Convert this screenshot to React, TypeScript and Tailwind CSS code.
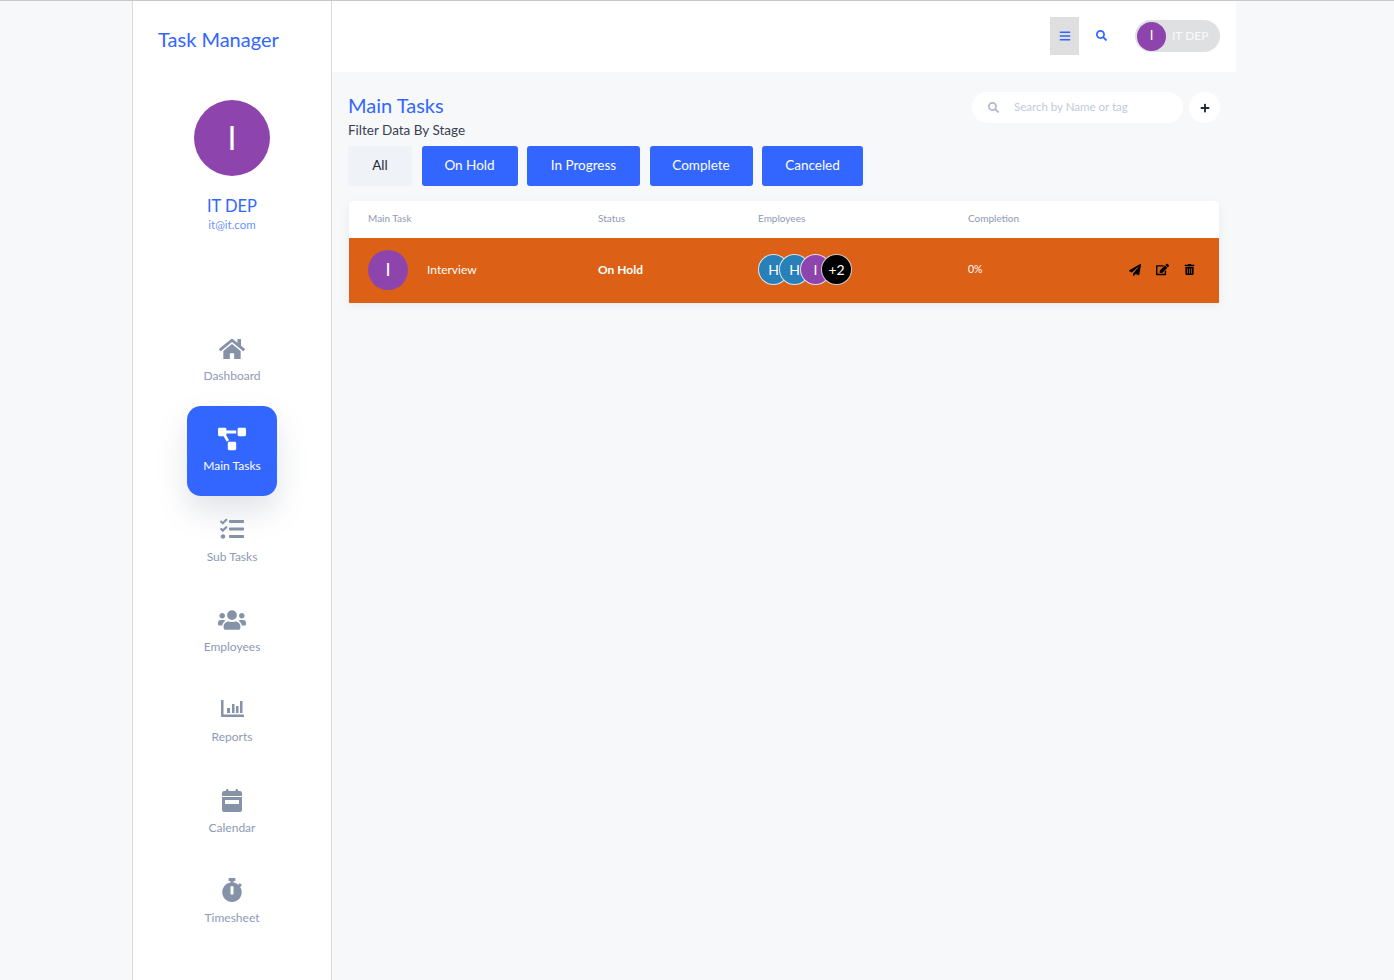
import React from "react";
import { FaHome, FaProjectDiagram, FaTasks, FaUsers, FaStopwatch, FaSearch, FaBars, FaPlus, FaPaperPlane, FaEdit, FaTrashAlt } from "react-icons/fa";

const font = { fontFamily: 'Lato, "Noto Sans", sans-serif' };

function ChartIcon() {
  return (
    <svg width="24" height="19" viewBox="0 0 24 19" fill="currentColor">
      <path d="M1 1h2.5v14.5H23a1 1 0 0 1 1 1V18H2a1 1 0 0 1-1-1z" />
      <rect x="7" y="9" width="3" height="5" />
      <rect x="12" y="5" width="2.5" height="9" />
      <rect x="16" y="7" width="2.5" height="7" />
      <rect x="20" y="2" width="2.5" height="12" />
    </svg>
  );
}

function CalendarIcon() {
  return (
    <svg width="20" height="23" viewBox="0 0 20 23" fill="currentColor">
      <rect x="4" y="0" width="2.5" height="4" rx="1" />
      <rect x="13.5" y="0" width="2.5" height="4" rx="1" />
      <path d="M2 2h16a2 2 0 0 1 2 2v3H0V4a2 2 0 0 1 2-2z" />
      <path d="M0 8h20v13a2 2 0 0 1-2 2H2a2 2 0 0 1-2-2z M3 11v4h14v-4z" fillRule="evenodd" />
    </svg>
  );
}

const navItems = [
  { label: "Dashboard", icon: <FaHome size={26} />, gap: "", pad: "pb-0" },
  { label: "Main Tasks", icon: <FaProjectDiagram size={28} />, gap: "mb-px", pad: "pb-0", active: true },
  { label: "Sub Tasks", icon: <FaTasks size={24} />, gap: "", pad: "pb-[2px]" },
  { label: "Employees", icon: <FaUsers size={28} />, gap: "", pad: "pb-0" },
  { label: "Reports", icon: <ChartIcon />, gap: "mb-px", pad: "pb-[3px]" },
  { label: "Calendar", icon: <CalendarIcon />, gap: "", pad: "pb-[2px]" },
  { label: "Timesheet", icon: <FaStopwatch size={24} />, gap: "", pad: "pb-[2px]" },
];

const stages = [
  { label: "On Hold", w: "w-[96px]" },
  { label: "In Progress", w: "w-[113px]" },
  { label: "Complete", w: "w-[103px]" },
  { label: "Canceled", w: "w-[101px]" },
];

function Bubble({ text, color, className = "" }: { text: string; color: string; className?: string }) {
  return (
    <div className={`w-[31px] h-[31px] rounded-full border border-white/80 flex items-center justify-center text-[14px] text-white shrink-0 ${color} ${className}`}>
      {text}
    </div>
  );
}

export default function App() {
  return (
    <div className="h-[980px] overflow-hidden bg-[#f7f8fa] border-t border-[#c8c8c8] pl-[132px] flex text-[#1f2937]" style={font}>
      <aside className="w-[200px] shrink-0 bg-white border-x border-[#dcdcdc] flex flex-col items-center">
        <div className="w-full pl-[25px] pt-[23px] text-[20px] leading-[30px] text-[#3366ff]">Task Manager</div>
        <div className="mt-[46px] w-[76px] h-[76px] rounded-full bg-[#8e44ad] flex items-center justify-center text-white text-[32px]">I</div>
        <div className="mt-[19px] text-[16.5px] leading-[22px] text-[#3366ff]">IT DEP</div>
        <div className="text-[11.5px] leading-[16px] text-[#6f94ff]">it@it.com</div>
        <nav className="mt-[83px] flex flex-col items-center">
          {navItems.map((item) => (
            <div key={item.label} className={`${item.gap} h-[90px] w-[90px] pt-[19px] rounded-[14px] flex flex-col items-center ${item.active ? "bg-[#3366ff] text-white shadow-[0_15px_30px_rgba(100,116,139,0.2)]" : "text-[#8592a8]"}`}>
              <div className={`h-[28px] flex items-center justify-center ${item.pad}`}>{item.icon}</div>
              <div className={`mt-[4px] text-[12px] leading-[18px] ${item.active ? "text-white" : "text-[#8e9ab5]"}`}>{item.label}</div>
            </div>
          ))}
        </nav>
      </aside>
      <main className="w-[904px] shrink-0">
        <header className="h-[71px] bg-white flex items-start justify-end pr-4 pt-[16px]">
          <div className="w-[29px] h-[38px] bg-[#dfdfdf] flex items-center justify-center text-[#3366ff]"><FaBars size={12} /></div>
          <div className="ml-[16px] w-[12px] h-[36px] flex items-center justify-center text-[#3366ff]"><FaSearch size={11} /></div>
          <div className="ml-[28px] mt-[3px] w-[85px] h-[32px] rounded-full bg-[#dfe0e2] flex items-center pl-[2px]">
            <div className="w-[29px] h-[29px] rounded-full bg-[#8e44ad] flex items-center justify-center text-white text-[13px]">I</div>
            <span className="ml-[6px] text-[12px] text-white/80">IT DEP</span>
          </div>
        </header>
        <div className="px-4 pt-[19px]">
          <div className="flex justify-between items-start">
            <div>
              <h1 className="text-[20px] leading-[30px] -mt-px text-[#3366ff]">Main Tasks</h1>
              <div className="mt-px text-[13.5px] leading-[18px] text-[#374151]">Filter Data By Stage</div>
            </div>
            <div className="mt-px flex items-center gap-[6px]">
              <div className="w-[211px] h-[31px] rounded-full bg-white flex items-center pl-[16px] text-[#aebacd]">
                <FaSearch size={11} />
                <span className="ml-[15px] -mt-px text-[11.5px] text-[#c1cbdc]">Search by Name or tag</span>
              </div>
              <div className="w-[31px] h-[31px] rounded-full bg-white flex items-center justify-center text-[#1f2937]"><FaPlus size={10} /></div>
            </div>
          </div>
          <div className="mt-[7px] flex gap-[9.5px] text-[13.5px]">
            <div className="w-[64px] h-[40px] pb-px rounded-[3px] bg-[#eff2f7] flex items-center justify-center text-[#1f2937]">All</div>
            {stages.map((s) => (
              <div key={s.label} className={`${s.w} h-[40px] pb-px rounded-[3px] bg-[#3366ff] text-white flex items-center justify-center`}>{s.label}</div>
            ))}
          </div>
          <div className="mt-[15px] ml-px w-[870px] rounded-t-[3px] bg-white shadow-[0_2px_8px_rgba(100,116,139,0.1)]">
            <div className="grid grid-cols-[230px_160px_210px_1fr] h-[37px] pb-[2px] items-center pl-[19px] text-[10px] text-[#8e9ab5]">
              <div>Main Task</div>
              <div>Status</div>
              <div>Employees</div>
              <div>Completion</div>
            </div>
            <div className="grid grid-cols-[230px_160px_210px_1fr] h-[65px] pb-[2px] items-center pl-[19px] bg-[#dc6015] text-white text-[12px]">
              <div className="flex items-center">
                <div className="w-[40px] h-[40px] rounded-full bg-[#8e44ad] flex items-center justify-center text-[18px]">I</div>
                <span className="ml-[19px]">Interview</span>
              </div>
              <div className="font-bold">On Hold</div>
              <div className="flex">
                <Bubble text="H" color="bg-[#2980b9]" />
                <Bubble text="H" color="bg-[#2980b9]" className="-ml-[10px]" />
                <Bubble text="I" color="bg-[#8e44ad]" className="-ml-[10px]" />
                <Bubble text="+2" color="bg-black" className="-ml-[10px]" />
              </div>
              <div className="flex items-center justify-between pr-[24px] text-[10.5px]">
                <span>0%</span>
                <div className="flex items-center gap-[15px] text-black">
                  <FaPaperPlane size={12} />
                  <FaEdit size={13} />
                  <FaTrashAlt size={11} />
                </div>
              </div>
            </div>
          </div>
        </div>
      </main>
    </div>
  );
}
